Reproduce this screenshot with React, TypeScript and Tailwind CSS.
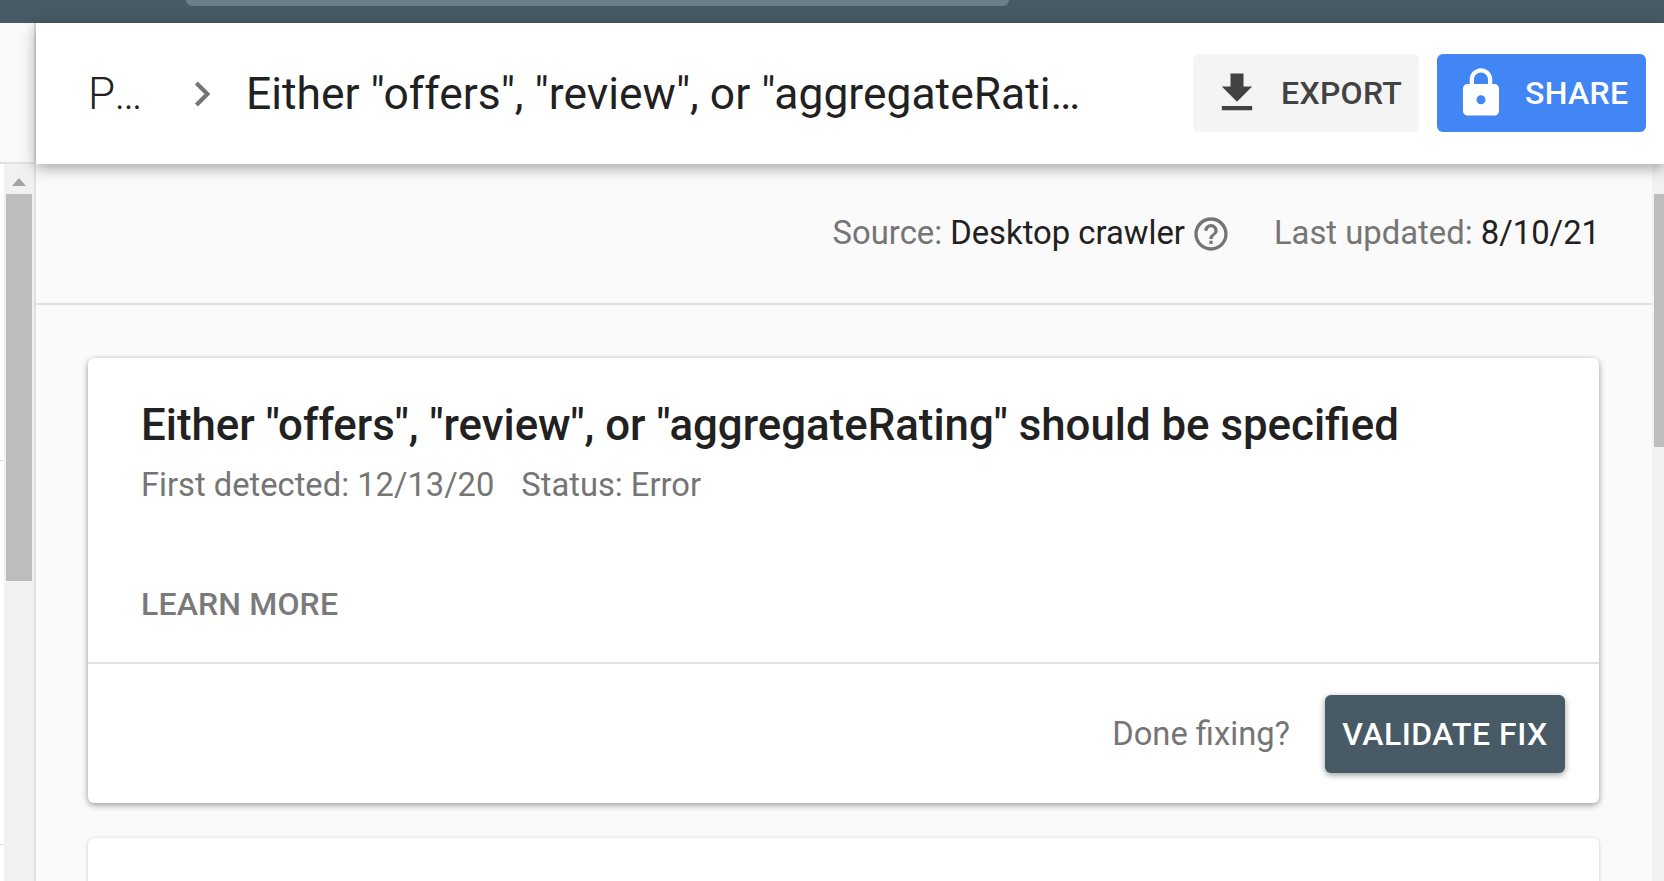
const downloadPath = 'M19 9h-4V3H9v6H5l7 7 7-7zM5 18v2h14v-2H5z';
const lockPath =
  'M18 8h-1V6c0-2.76-2.24-5-5-5S7 3.24 7 6v2H6c-1.1 0-2 .9-2 2v10c0 1.1.9 2 2 2h12c1.1 0 2-.9 2-2V10c0-1.1-.9-2-2-2zm-6 9c-1.1 0-2-.9-2-2s.9-2 2-2 2 .9 2 2-.9 2-2 2zm3.1-9H8.9V6c0-1.71 1.39-3.1 3.1-3.1 1.71 0 3.1 1.39 3.1 3.1v2z';
const helpPath =
  'M11 18h2v-2h-2v2zm1-16C6.48 2 2 6.48 2 12s4.48 10 10 10 10-4.48 10-10S17.52 2 12 2zm0 18c-4.41 0-8-3.59-8-8s3.59-8 8-8 8 3.59 8 8-3.59 8-8 8zm0-14c-2.21 0-4 1.79-4 4h2c0-1.1.9-2 2-2s2 .9 2 2c0 2-3 1.75-3 5h2c0-2.25 3-2.5 3-5 0-2.21-1.79-4-4-4z';
const chevronPath = 'M10 6L8.59 7.41 13.17 12l-4.58 4.59L10 18l6-6z';

function Icon({ d, className }: { d: string; className: string }) {
  return (
    <svg viewBox="0 0 24 24" fill="currentColor" className={className}>
      <path d={d} />
    </svg>
  );
}

function ArrowUp() {
  return (
    <svg viewBox="0 0 14 8" className="h-[8px] w-[14px] fill-[#a3a3a3]">
      <path d="M7 0l7 8H0z" />
    </svg>
  );
}

export default function App() {
  return (
    <div className="flex h-[881px] w-[1664px] flex-col overflow-hidden bg-[#fafafa] font-['Roboto',sans-serif]">
      {/* Browser bar */}
      <div className="h-[23px] shrink-0 bg-[#475a66] pl-[186px]">
        <div className="h-[6px] w-[823px] rounded-b-[12px] bg-[#6c7e87]" />
      </div>

      <div className="flex min-h-0 flex-1">
        {/* Left rail */}
        <div className="flex w-[36px] shrink-0 flex-col border-r-2 border-[#e0e0e0]">
          <div className="h-[141px] shrink-0 border-b-2 border-[#e0e0e0] bg-[#fafafa]" />
          <div className="flex min-h-0 flex-1">
            <div className="flex w-[4px] shrink-0 flex-col bg-white pt-[296px]">
              <div className="h-[1px] bg-[#e0e0e0]" />
              <div className="mt-[383px] h-[1px] bg-[#e0e0e0]" />
            </div>
            <div className="flex flex-1 flex-col items-center bg-[#f1f1f1] pt-[14px]">
              <ArrowUp />
              <div className="mt-[8px] h-[387px] w-[26px] bg-[#bdbdbd]" />
            </div>
          </div>
        </div>

        <div className="flex min-w-0 flex-1 flex-col">
          {/* Page header */}
          <header className="relative z-10 flex h-[141px] shrink-0 items-center bg-white pl-[52px] pr-[18px] shadow-[0_4px_14px_rgba(0,0,0,0.35)]">
            <span className="w-[60px] text-[44px] font-light tracking-[6px] text-[#212121]">P…</span>
            <Icon d={chevronPath} className="ml-[29px] h-[50px] w-[50px] text-[#757575]" />
            <span className="ml-[19px] pt-[2px] text-[44.4px] text-[#212121]">
              Either "offers", "review", or "aggregateRati…
            </span>
            <div className="ml-auto flex gap-[18px] pb-[2px]">
              <button className="flex h-[78px] w-[226px] items-center rounded-[6px] bg-[#f4f4f4] pl-[18px] text-[32px] font-medium tracking-[0.3px] text-[#424242]">
                <Icon d={downloadPath} className="h-[52px] w-[52px]" />
                <span className="ml-[18px]">EXPORT</span>
              </button>
              <button className="flex h-[78px] w-[209px] items-center rounded-[6px] bg-[#4285f4] pl-[17px] text-[32px] font-medium tracking-[0.3px] text-white">
                <Icon d={lockPath} className="h-[54px] w-[54px]" />
                <span className="ml-[17px]">SHARE</span>
              </button>
            </div>
          </header>

          <div className="flex min-h-0 flex-1">
            <main className="min-w-0 flex-1 overflow-hidden">
              {/* Source line */}
              <div className="flex h-[141px] items-center justify-end gap-[43px] border-b-2 border-[#e0e0e0] pr-[52px] text-[32.8px]">
                <div className="flex items-center text-[#757575]">
                  <span>Source:</span>
                  <span className="ml-[8px] text-[#212121]">Desktop crawler</span>
                  <Icon d={helpPath} className="ml-[6px] h-[40px] w-[40px]" />
                </div>
                <div className="text-[#757575]">
                  Last updated: <span className="text-[#212121]">8/10/21</span>
                </div>
              </div>

              {/* Issue card */}
              <section className="mr-[53px] ml-[52px] mt-[53px] rounded-[6px] bg-white shadow-[0_2px_6px_rgba(0,0,0,0.4)]">
                <div className="h-[304px] px-[53px] pt-[37px]">
                  <h1 className="text-[43.8px] leading-[60px] font-medium text-[#212121]">
                    Either "offers", "review", or "aggregateRating" should be specified
                  </h1>
                  <div className="mt-[6px] flex gap-[27px] text-[32.7px] text-[#757575]">
                    <span>First detected: 12/13/20</span>
                    <span>Status: Error</span>
                  </div>
                  <div className="mt-[70px] text-[32px] font-medium tracking-[0.15px] text-[#7a7a7a]">
                    LEARN MORE
                  </div>
                </div>
                <div className="flex h-[141px] items-center justify-end border-t-2 border-[#e0e0e0] pr-[34px]">
                  <span className="pt-[2px] text-[32.7px] text-[#757575]">Done fixing?</span>
                  <button className="ml-[35px] h-[78px] w-[240px] rounded-[6px] bg-[#475a66] text-[32px] font-medium tracking-[0.5px] text-white shadow-[0_2px_6px_rgba(0,0,0,0.4)]">
                    VALIDATE FIX
                  </button>
                </div>
              </section>

              {/* Next card, cut off by the window */}
              <section className="mr-[53px] ml-[52px] mt-[35px] h-[200px] rounded-[6px] bg-white shadow-[0_1px_4px_rgba(0,0,0,0.2)]" />
            </main>

            {/* Right scrollbar */}
            <div className="flex w-[12px] shrink-0 flex-col items-end bg-[#f1f1f1] pt-[30px]">
              <div className="h-[253px] w-[10px] bg-[#bdbdbd]" />
            </div>
          </div>
        </div>
      </div>
    </div>
  );
}
